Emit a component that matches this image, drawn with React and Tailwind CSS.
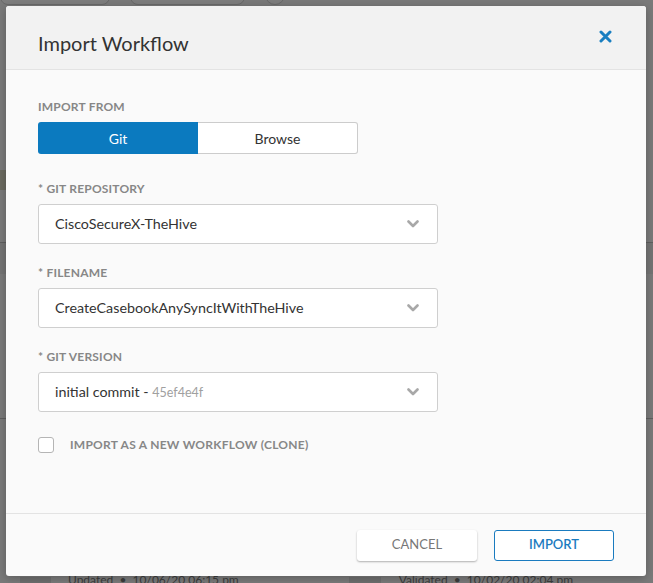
import React from "react";

const font = { fontFamily: "Lato, 'Open Sans', sans-serif" };

const Chevron = () => (
  <svg width="12" height="8" viewBox="0 0 12 8" fill="none">
    <path d="M1.5 1.5 L6 6 L10.5 1.5" stroke="#a8a8a8" strokeWidth="2.6" strokeLinecap="round" strokeLinejoin="round" />
  </svg>
);

const Label = ({ children, className = "" }) => (
  <div className={`text-[12px] leading-[16px] font-bold tracking-[0.2px] text-[#878787] ${className}`}>
    {children}
  </div>
);

const Select = ({ children }) => (
  <div className="flex h-[40px] w-[400px] items-center justify-between rounded-[3px] border border-[#cfcfcf] bg-white pl-[16px] pr-[18px]">
    <div className="text-[14.3px] text-[#333]">{children}</div>
    <Chevron />
  </div>
);

const Field = ({ label, children }) => (
  <div className="flex flex-col gap-[7px]">
    <Label>{label}</Label>
    <Select>{children}</Select>
  </div>
);

export default function App() {
  return (
    <div className="relative h-[583px] w-[653px] overflow-hidden bg-[#7a7a7a]" style={font}>
      {/* dimmed page behind the dialog */}
      <div className="flex flex-col">
        <div className="flex items-start gap-[20px]">
          <div className="-mt-[15px] h-[20px] w-[110px] rounded-[8px] border border-[#6a6a6a] bg-[#7e7e7e]" />
          <div className="-mt-[15px] h-[20px] w-[115px] rounded-[8px] border border-[#6a6a6a] bg-[#7e7e7e]" />
          <div className="-mt-[15px] h-[20px] w-[20px] rounded-full border border-[#6a6a6a] bg-[#7e7e7e]" />
        </div>
        <div className="mt-[165px] h-[20px] w-[6px] bg-[#6b6a60]" />
        <div className="mt-[52px] h-[32px] border-t border-[#5f5f5f] bg-[#747474]" />
        <div className="h-[144px]" />
        <div className="h-[159px] border-t border-[#5f5f5f]" />
        <div className="flex h-[10px] items-start text-[12px] leading-[12px] text-[#3c3c3c]">
          <div className="ml-[20px] h-[10px] w-[31px] bg-[#6e6e6e]" />
          <div className="ml-[17px] -mt-[3px]">Updated&nbsp;&nbsp;•&nbsp;&nbsp;10/06/20 06:15 pm</div>
          <div className="ml-[110px] h-[10px] w-[32px] bg-[#6e6e6e]" />
          <div className="ml-[18px] -mt-[3px]">Validated&nbsp;&nbsp;•&nbsp;&nbsp;10/02/20 02:04 pm</div>
        </div>
      </div>

      {/* dialog */}
      <div className="absolute left-[6px] top-[6px] flex h-[570px] w-[640px] flex-col overflow-hidden rounded-[3px] bg-[#fafafa] shadow-[0_2px_10px_rgba(0,0,0,0.25)]">
        <div className="flex h-[64px] items-start justify-between border-b border-[#e3e3e3] bg-[#f2f2f2] pl-[32px] pr-[34px]">
          <h1 className="pt-[24px] text-[20px] leading-[26px] text-[#333]">Import Workflow</h1>
          <button className="mt-[24px]" aria-label="Close">
            <svg width="13" height="13" viewBox="0 0 13 13">
              <path d="M2 2 L11 11 M11 2 L2 11" stroke="#1a7fc1" strokeWidth="3" strokeLinecap="round" />
            </svg>
          </button>
        </div>

        <div className="flex flex-1 flex-col pl-[32px] pt-[29px]">
          <Label>IMPORT FROM</Label>
          <div className="mt-[7px] flex h-[32px] w-[320px] text-[14px]">
            <div className="flex w-[160px] items-center justify-center rounded-l-[3px] bg-[#0b7abf] text-white">Git</div>
            <div className="flex w-[160px] items-center justify-center rounded-r-[3px] border border-l-0 border-[#cccccc] bg-white text-[#333]">Browse</div>
          </div>

          <div className="mt-[27px] flex flex-col gap-[21px]">
            <Field label="* GIT REPOSITORY">CiscoSecureX-TheHive</Field>
            <Field label="* FILENAME">CreateCasebookAnySyncItWithTheHive</Field>
            <Field label="* GIT VERSION">
              initial commit - <span className="text-[12.5px] text-[#a0a0a0]">45ef4e4f</span>
            </Field>
          </div>

          <label className="mt-[24px] flex items-center gap-[16px]">
            <span className="h-[16px] w-[16px] rounded-[3px] border border-[#b5b5b5] bg-white" />
            <span className="text-[12px] font-bold tracking-[0.25px] text-[#878787]">IMPORT AS A NEW WORKFLOW (CLONE)</span>
          </label>
        </div>

        <div className="flex h-[63px] items-center justify-end gap-[17px] border-t border-[#e3e3e3] pr-[32px]">
          <button className="h-[31px] w-[120px] rounded-[3px] bg-white text-[13px] text-[#777] shadow-[0_1px_2px_rgba(0,0,0,0.3)]">
            CANCEL
          </button>
          <button className="h-[31px] w-[120px] rounded-[3px] border border-[#1a7bbf] bg-white text-[13px] font-semibold text-[#1a7bbf]">
            IMPORT
          </button>
        </div>
      </div>
    </div>
  );
}
